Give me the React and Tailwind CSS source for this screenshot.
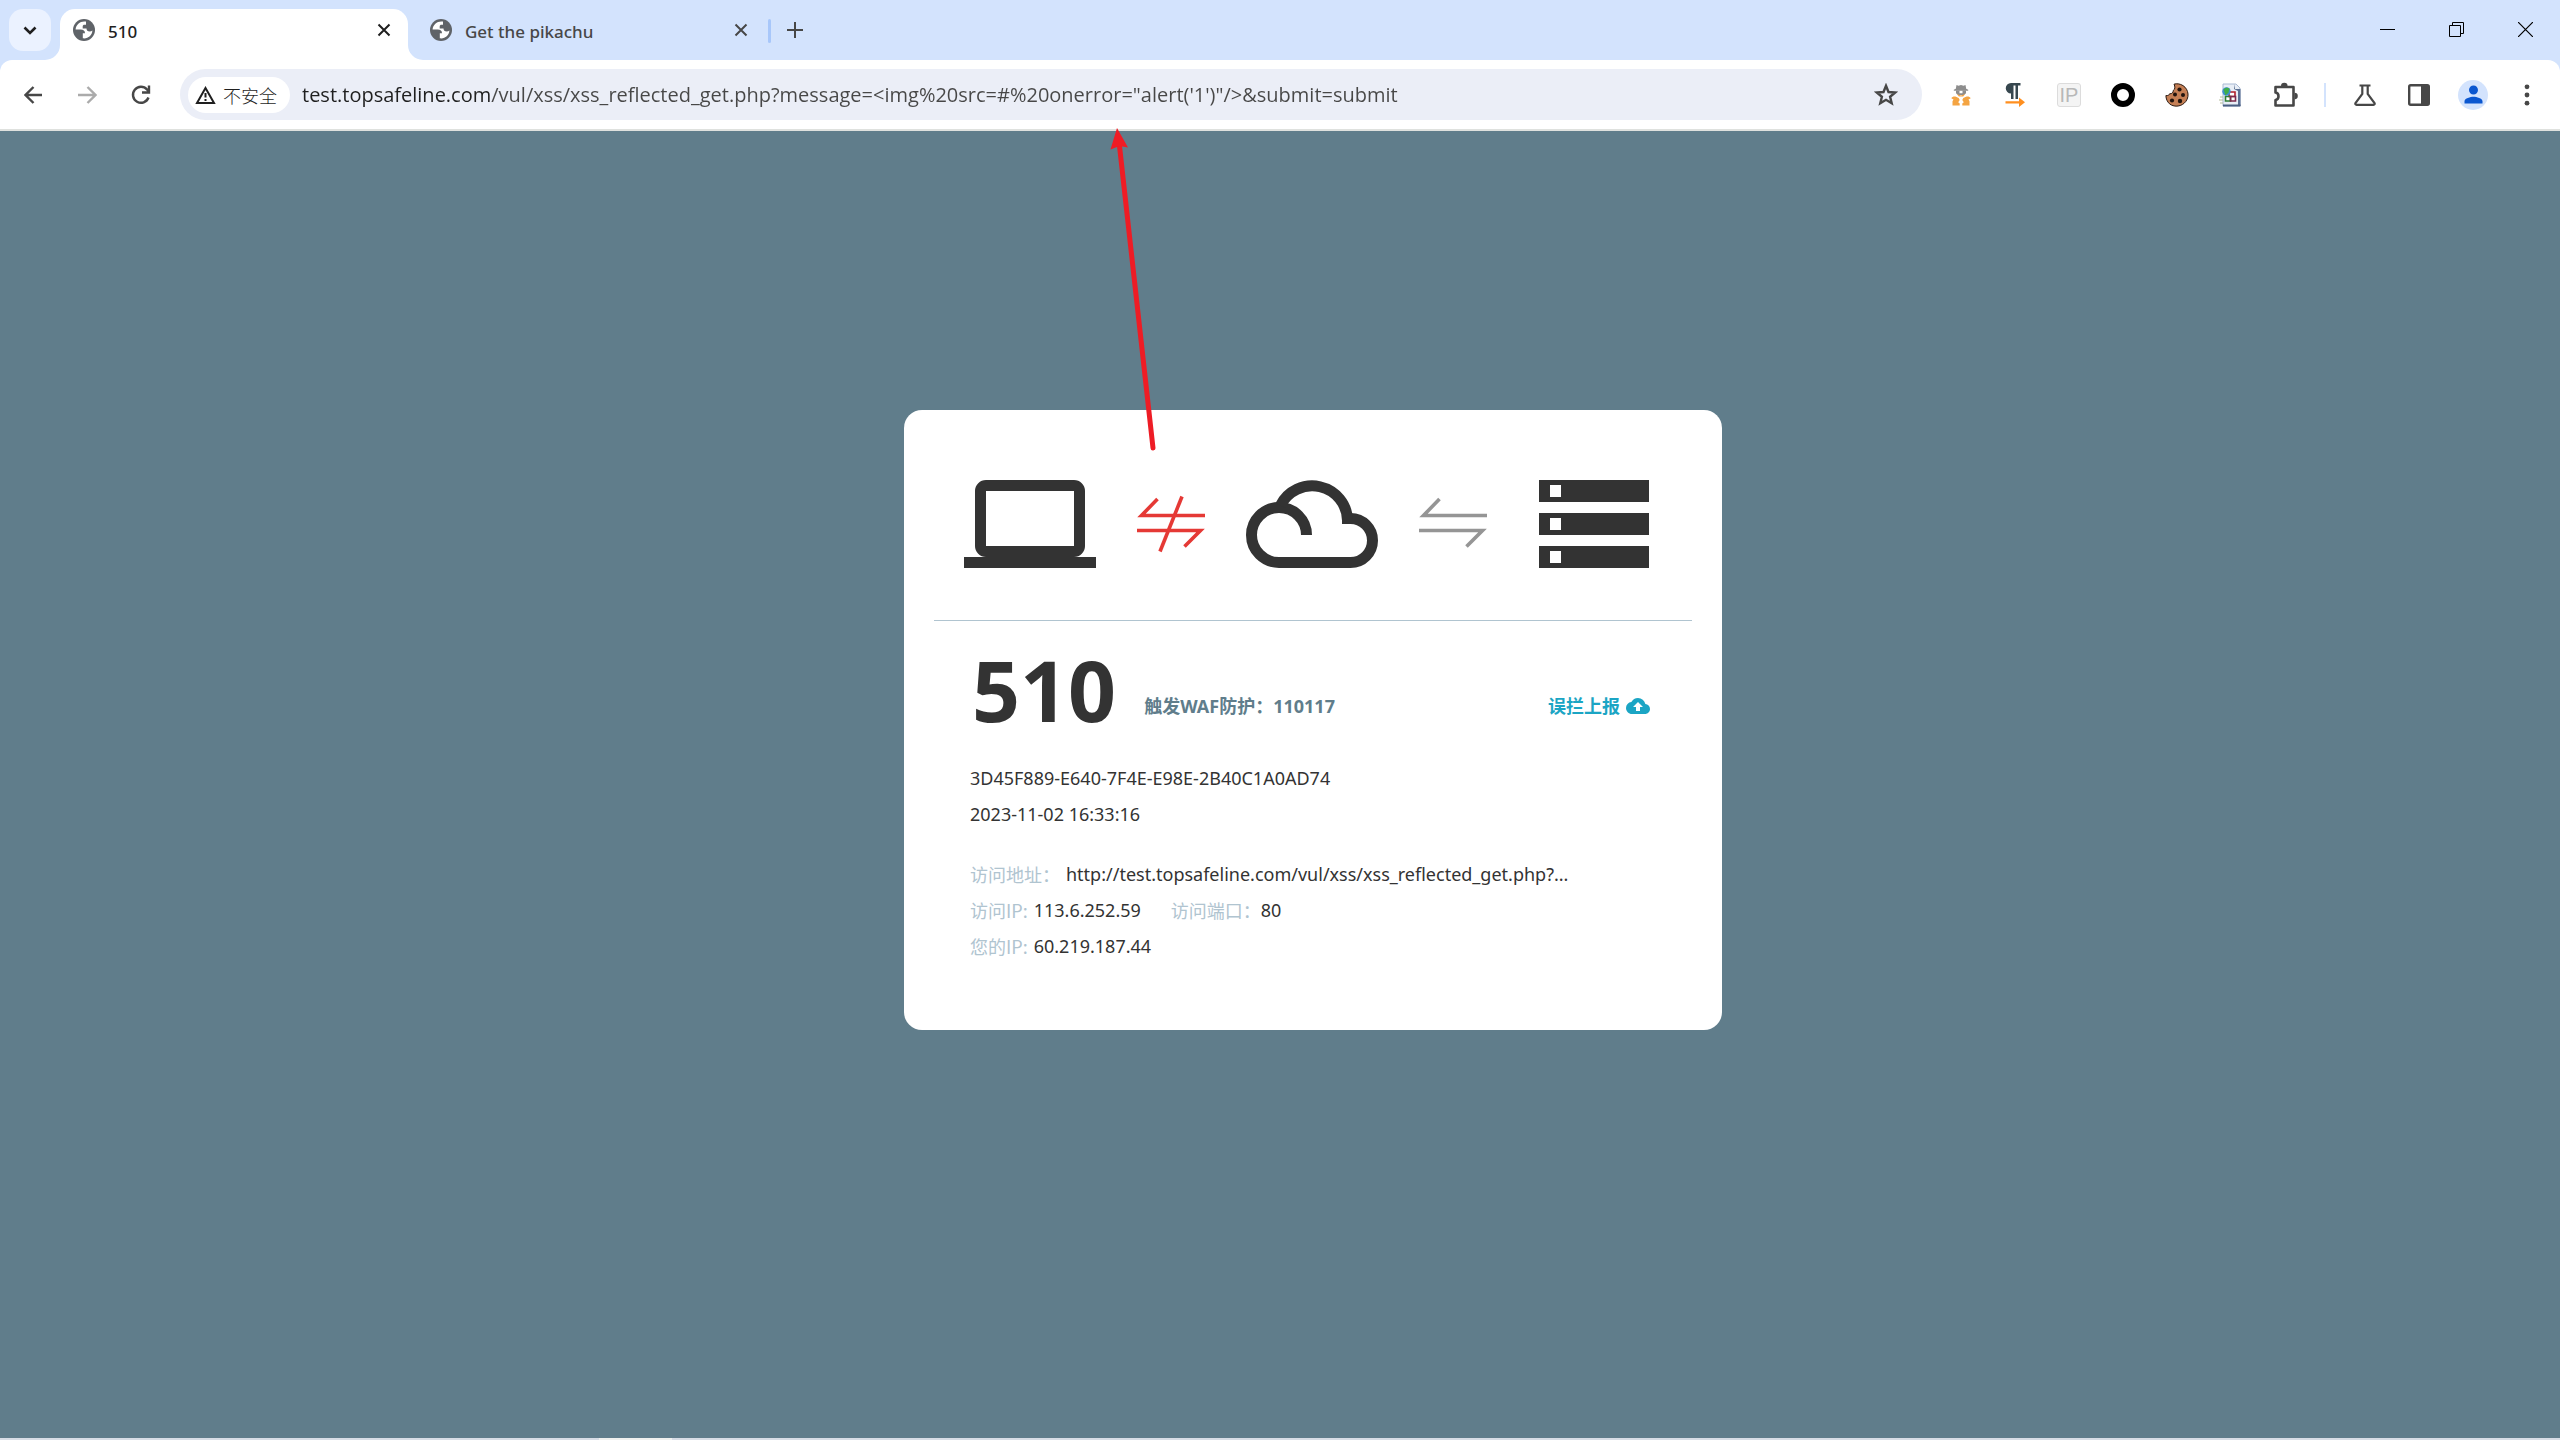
import { useState } from 'react'
import { MdCloudUpload, MdPerson } from 'react-icons/md'

const SANS = "font-['Noto_Sans','Noto_Sans_CJK_SC',sans-serif]"
const CJK = "font-['Noto_Sans_CJK_SC',sans-serif]"

const TABS = [
  { id: 1, title: '510' },
  { id: 2, title: 'Get the pikachu' },
]

const ADDRESS =
  'test.topsafeline.com/vul/xss/xss_reflected_get.php?message=<img%20src=#%20onerror="alert(\'1\')"/>&submit=submit'

function GlobeIcon() {
  return (
    <svg width="22" height="22" viewBox="0 0 22 22" fill="none" className="shrink-0">
      <circle cx="11" cy="11" r="11" fill="#5f6368" />
      <path
        d="M13 2.600C8 1.500 3 5 2.600 10.500h5.200c2.600 0 4.200 1.300 4.200 3.700H9.800v5.100c4.900.8 9.300-2.800 9.600-7.800-.8.700-1.700.9-2.600.9-2.200 0-3.300-1.100-3.300-2.900H9.700V7.600c0-1.300.7-1.900 1.900-1.900h1.400z"
        fill="#fff"
      />
    </svg>
  )
}

function CloseIcon() {
  return (
    <svg width="14" height="14" viewBox="0 0 14 14" stroke="currentColor" strokeWidth="2">
      <path d="M1.500 1.500l11 11M12.500 1.500l-11 11" />
    </svg>
  )
}

function TabStrip({ active, onSelect }) {
  return (
    <div className="flex h-[60px] bg-[#d3e3fd] pl-[9px]">
      <button
        aria-label="Search tabs"
        className="mt-[9px] flex size-[42px] items-center justify-center rounded-[14px] bg-[#ebf2ff] text-[#1f1f1f]"
      >
        <svg width="14" height="9" viewBox="0 0 14 9" fill="none" stroke="currentColor" strokeWidth="2.600">
          <path d="M1.500 1.500L7 7l5.500-5.500" />
        </svg>
      </button>

      {TABS.map(tab => {
        const on = tab.id === active
        return (
          <div
            key={tab.id}
            className={`relative flex h-[51px] self-end items-center rounded-t-[15px] pb-[9px] ${
              on ? 'ml-[9px] w-[348px] bg-white pl-[13px] pr-[17px] text-[#1f1f1f]' : 'w-[360px] pl-[22px] pr-[20px] text-[#474747]'
            }`}
          >
            {on && (
              <>
                <svg className="absolute -left-[15px] bottom-0" width="15" height="15" viewBox="0 0 15 15">
                  <path d="M15 0v15H0A15 15 0 0 0 15 0z" fill="#fff" />
                </svg>
                <svg className="absolute -right-[15px] bottom-0" width="15" height="15" viewBox="0 0 15 15">
                  <path d="M0 0v15h15A15 15 0 0 1 0 0z" fill="#fff" />
                </svg>
              </>
            )}
            <GlobeIcon />
            <button
              onClick={() => onSelect(tab.id)}
              className="ml-[13px] flex-1 truncate pt-[3px] text-left text-[17px] leading-6 font-medium"
            >
              {tab.title}
            </button>
            <button aria-label={`Close ${tab.title}`}>
              <CloseIcon />
            </button>
          </div>
        )
      })}

      <div className="mt-[19px] h-6 w-[3px] rounded-full bg-[#a8c7fa]" />
      <button aria-label="New tab" className="ml-4 flex h-[60px] items-center text-[#474747]">
        <svg width="16" height="16" viewBox="0 0 16 16" stroke="currentColor" strokeWidth="2">
          <path d="M8 0v16M0 8h16" />
        </svg>
      </button>

      <div className="ml-auto flex h-[59px] text-black">
        <button aria-label="Minimize" className="flex w-[69px] items-center justify-center">
          <svg width="15" height="15" viewBox="0 0 15 15" stroke="currentColor">
            <path d="M0 7.500h15" />
          </svg>
        </button>
        <button aria-label="Restore" className="flex w-[69px] items-center justify-center">
          <svg width="15" height="15" viewBox="0 0 15 15" fill="none" stroke="currentColor">
            <path d="M.5 3.500h11v11H.5zM3.500 3.500v-3h11v11h-3" />
          </svg>
        </button>
        <button aria-label="Close" className="flex w-[69px] items-center justify-center">
          <svg width="15" height="15" viewBox="0 0 15 15" stroke="currentColor" strokeWidth="1.200">
            <path d="M0 0l15 15M15 0L0 15" />
          </svg>
        </button>
      </div>
    </div>
  )
}

const EXTENSIONS = [
  {
    name: 'Spy',
    icon: (
      <svg width="20" height="22" viewBox="0 0 20 22">
        <path d="M5.500 1l2 .8L10 1l2.500.8 2-.8.7 3.800 2 .9v1.100H2.800V5.700l2-.9z" fill="#8d8d8d" />
        <path d="M5 6.500h3.500v2.700h3V6.500H15v2.700l-2 1.800H7L5 9.200z" fill="#8d8d8d" />
        <path d="M5.800 10L10 11.500l4.200-1.500-2 2.500H7.800z" fill="#f4a442" />
        <path
          d="M8.700 21.500H1.500v-4.300l1-1.700L.3 14.300c.8-1.500 2.600-2 4.700-1.500l2.700 1.100 1 2.200-1.500 2.100 1.500 1.300zM11.300 21.500h7.200v-4.300l-1-1.700 2.200-1.200c-.8-1.500-2.600-2-4.700-1.500l-2.700 1.100-1 2.200 1.500 2.100-1.500 1.300z"
          fill="#f4a442"
        />
      </svg>
    ),
  },
  {
    name: 'Text direction',
    icon: (
      <svg width="20" height="24" viewBox="0 0 20 24">
        <path d="M15.500 0H6a5 5 0 0 0 0 10.500V16h2.500V2.500h2V16H13V2.500h2.500z" fill="#37474f" />
        <path d="M.5 18.200H14v-3.700l6 4.700-6 4.800v-3.600H.5z" fill="#ff8f1f" />
      </svg>
    ),
  },
  {
    name: 'IP',
    icon: (
      <span className="flex size-6 items-center justify-center rounded-[3px] border border-[#dcdcdc] bg-[#f4f4f4] font-['Liberation_Sans',sans-serif] text-[20px] leading-6 text-[#b8b8b8]">
        IP
      </span>
    ),
  },
  {
    name: 'Ring',
    icon: (
      <svg width="24" height="24" viewBox="0 0 24 24" fill="none">
        <circle cx="12" cy="12" r="9" stroke="#000" strokeWidth="6" />
      </svg>
    ),
  },
  {
    name: 'Cookie',
    icon: (
      <svg width="24" height="24" viewBox="0 0 24 24">
        <path
          d="M9 1.200c3-.9 6-.4 9 1.400a11 11 0 0 1 1.200 17.600c-4 3.600-10.500 4-14.700.6C2.300 18.800 1 16 .9 12.600c2 .1 3.400-.4 3.700-1.800 2.400 0 3.800-1.100 3.600-3.300 2-.9 2.100-4 .8-6.300z"
          fill="#c57f55"
          stroke="#2a1a12"
        />
        <g fill="#21140e">
          <circle cx="14.500" cy="6.500" r="2.100" />
          <circle cx="18" cy="12" r="2" />
          <circle cx="10" cy="11.500" r="2" />
          <circle cx="7" cy="17.500" r="2.100" />
          <circle cx="15" cy="18" r="2.200" />
        </g>
      </svg>
    ),
  },
  {
    name: 'Page tools',
    icon: (
      <svg width="24" height="24" viewBox="0 0 24 24">
        <path d="M4 1h13l4 4v18H4z" fill="#e8eef6" stroke="#a9bad3" />
        <path d="M16 1v5h5.500v17H19V8l-4-2z" fill="#5a6f92" />
        <path d="M7 10h9v8H7z" fill="#fff" />
        <path d="M10 9h6v4.500h-6z" fill="none" stroke="#b3202c" strokeWidth="1.600" />
        <path d="M6.500 13.500h5v4.500h-5z" fill="none" stroke="#2f7d36" strokeWidth="1.600" />
        <path d="M11.500 13.500h5v4.500h-5z" fill="none" stroke="#7c2a4c" strokeWidth="1.600" />
        <circle cx="7.500" cy="8.500" r="4.200" fill="#3c8fd0" />
        <path d="M4.500 6.500c2-2 4-2 6-1l-1 4-3 3z" fill="#3fae49" />
        <path d="M1 14h3M0 17h4M1 20h3" stroke="#b5bd9a" />
        <path d="M4 22.500h17.500" stroke="#4a5f82" strokeWidth="2" />
      </svg>
    ),
  },
  {
    name: 'Extensions',
    icon: (
      <svg width="26" height="26" viewBox="0 0 26 26" fill="none">
        <path
          d="M3.500 5h18v18.500h-18v-5.500c4-.5 4-7 0-7.500z"
          stroke="#474747"
          strokeWidth="2.600"
          strokeLinejoin="round"
        />
        <path d="M9 4a3.300 3.300 0 0 1 6.600 0zM22.500 10.800a3.300 3.300 0 0 1 0 6.600z" fill="#474747" />
      </svg>
    ),
  },
]

function Toolbar() {
  return (
    <div className="bg-[#d3e3fd]">
      <div className="flex h-[71px] items-center rounded-t-[12px] border-b-2 border-[#dfe1de] bg-white pl-6 pr-[6px] text-[#474747]">
        <button aria-label="Back">
          <svg width="19" height="18" viewBox="0 0 19 18" fill="none" stroke="currentColor" strokeWidth="2.400">
            <path d="M18 9H2M9.500 1L1.500 9l8 8" />
          </svg>
        </button>
        <button aria-label="Forward" disabled className="ml-[35px] text-[#ababab]">
          <svg width="19" height="18" viewBox="0 0 19 18" fill="none" stroke="currentColor" strokeWidth="2.400">
            <path d="M0 9h16M9.500 1l8 8-8 8" />
          </svg>
        </button>
        <button aria-label="Reload" className="ml-[34px]">
          <svg width="20" height="20" viewBox="0 0 20 20" fill="none" stroke="currentColor" strokeWidth="2.400">
            <path d="M17.500 12.500A8 8 0 1 1 16 4.500l1.500 1.700M18 .5v7h-7" />
          </svg>
        </button>

        <div className="ml-[29px] flex h-[51px] flex-1 items-center rounded-full bg-[#ebeef7] pl-2 pr-6">
          <button className="flex h-9 items-center gap-[7px] rounded-full bg-white pl-[7px] pr-[13px] text-[#1f1f1f]">
            <svg width="21" height="18" viewBox="0 0 21 18" fill="none" stroke="currentColor" strokeWidth="2">
              <path d="M10.500 2L19 17H2z" />
              <path d="M10.500 7v4.500M10.500 13v2" />
            </svg>
            <span className={`${CJK} text-[18px] leading-6 font-light`}>不安全</span>
          </button>
          <input
            aria-label="Address"
            defaultValue={ADDRESS}
            className="ml-3 h-9 min-w-0 flex-1 bg-linear-to-r from-[#1f1f1f] from-[188px] to-[#474747] to-[188px] bg-clip-text font-['Open_Sans',sans-serif] text-[20px] text-transparent outline-none"
          />
          <button aria-label="Bookmark this page">
            <svg width="24" height="24" viewBox="0 0 24 24" fill="none" stroke="currentColor" strokeWidth="2.400">
              <path d="M12 2.800l2.500 6.200 6.700.5-5.100 4.300 1.600 6.500L12 16.800l-5.700 3.500 1.600-6.500-5.100-4.300L9.500 9z" />
            </svg>
          </button>
        </div>

        <div className="ml-3 flex items-center">
          {EXTENSIONS.map(ext => (
            <button key={ext.name} aria-label={ext.name} className="flex w-[54px] justify-center">
              {ext.icon}
            </button>
          ))}
          <div className="ml-3 mr-3 h-6 w-[2px] bg-[#d3e3fd]" />
          <button aria-label="Labs" className="flex w-[54px] justify-center">
            <svg width="22" height="22" viewBox="0 0 22 22" fill="none" stroke="currentColor" strokeWidth="2.200">
              <path d="M5.500 1.500h11M8.300 1.500v8.500L1.500 19c-.5 1 0 1.800 1 1.800h17c1 0 1.500-.8 1-1.800l-6.800-9V1.500" />
            </svg>
          </button>
          <button aria-label="Side panel" className="flex w-[54px] justify-center">
            <svg width="22" height="22" viewBox="0 0 22 22" fill="none">
              <rect x="1.200" y="1.200" width="19.600" height="19.600" rx="1.500" stroke="currentColor" strokeWidth="2.400" />
              <path d="M13 1h8v20h-8z" fill="currentColor" />
            </svg>
          </button>
          <button aria-label="Profile" className="flex w-[54px] justify-center">
            <span className="flex size-[30px] items-center justify-center rounded-full bg-[#d3e3fd] text-[#0b57d0]">
              <MdPerson size={27} />
            </span>
          </button>
          <button aria-label="Menu" className="flex w-[54px] justify-center">
            <svg width="6" height="22" viewBox="0 0 6 22" fill="currentColor">
              <circle cx="3" cy="2.800" r="2.400" />
              <circle cx="3" cy="11" r="2.400" />
              <circle cx="3" cy="19.200" r="2.400" />
            </svg>
          </button>
        </div>
      </div>
    </div>
  )
}

function LaptopIcon() {
  return (
    <svg width="132" height="88" viewBox="0 0 132 88" fill="none">
      <rect x="16.500" y="5.500" width="99" height="66" rx="5.500" stroke="#333" strokeWidth="11" />
      <path d="M22 11h88v55H22z" fill="#fff" />
      <path d="M0 77h132v11H0z" fill="#333" />
    </svg>
  )
}

function CloudIcon() {
  return (
    <svg width="132" height="88" viewBox="0 0 132 88" fill="none" stroke="#333" strokeWidth="11">
      <path d="M60.500 55A27.500 27.500 0 1 0 33 82.500h71.500a22 22 0 0 0 0-44H96" />
      <path d="M101.500 44v-3.500A35.300 35 0 0 0 34.500 25.500" />
    </svg>
  )
}

function ServerIcon() {
  return (
    <svg width="132" height="88" viewBox="0 0 132 88">
      <path d="M11 0h110v22H11zM11 33h110v22H11zM11 66h110v22H11z" fill="#333" />
      <path d="M22 5h11v12H22zM22 38h11v12H22zM22 71h11v12H22z" fill="#fff" />
    </svg>
  )
}

function LinkArrows({ color, broken }) {
  return (
    <svg width="68" height="88" viewBox="0 0 68 88" fill="none" stroke={color} strokeWidth="3.600">
      <path d="M20.500 19L4.500 35.500H68M0 50.500h63.500L47.500 66.500" />
      {broken && <path d="M45 16.500L23 71.500" />}
    </svg>
  )
}

function Label({ children }) {
  return <span className={`${CJK} text-[#b0c4d0]`}>{children}</span>
}

function BlockCard() {
  return (
    <section className="relative w-[818px] rounded-[18px] bg-white px-[30px] pb-[66px] text-[18px] leading-9 text-[#333]">
      <div className="flex items-center justify-between border-b border-[#b0c4d0] pt-[70px] pb-[52px] pl-[30px] pr-8">
        <LaptopIcon />
        <LinkArrows color="#e53935" broken />
        <CloudIcon />
        <LinkArrows color="#959595" />
        <ServerIcon />
      </div>

      <div className="pl-9 pr-[42px]">
        <div className="flex items-end pt-[21px]">
          <h1 className="pl-[2px] text-[84px] leading-[96px] font-bold">510</h1>
          <p className="ml-7 pb-[14px] font-bold text-[#607d8b]">触发WAF防护：110117</p>
          <a href="#report" className="mb-[14px] ml-auto flex items-center gap-[6px] font-bold text-[#1ba5c4]">
            误拦上报
            <MdCloudUpload size={24} />
          </a>
        </div>

        <div className="mt-[22px]">
          <p>3D45F889-E640-7F4E-E98E-2B40C1A0AD74</p>
          <p>2023-11-02 16:33:16</p>
        </div>

        <div className="mt-6">
          <p className="flex gap-[6px]">
            <Label>访问地址：</Label>
            http://test.topsafeline.com/vul/xss/xss_reflected_get.php?...
          </p>
          <div className="flex gap-[30px]">
            <p className="flex gap-[6px]">
              <Label>访问IP:</Label>
              113.6.252.59
            </p>
            <p className="flex">
              <Label>访问端口：</Label>
              80
            </p>
          </div>
          <p className="flex gap-[6px]">
            <Label>您的IP:</Label>
            60.219.187.44
          </p>
        </div>
      </div>

      {/* pointer up to the address bar */}
      <svg className="absolute -top-[282px] left-[200px]" width="56" height="324" viewBox="0 0 56 324" fill="none">
        <path d="M15.500 18L49 320" stroke="#ee1c25" strokeWidth="5" strokeLinecap="round" />
        <path d="M13 0l11 19.500-8.500-1.500L6.500 21.500z" fill="#ee1c25" />
      </svg>
    </section>
  )
}

export default function App() {
  const [active, setActive] = useState(1)

  return (
    <div className={`flex min-h-screen flex-col ${SANS}`}>
      <header>
        <TabStrip active={active} onSelect={setActive} />
        <Toolbar />
      </header>

      <main className="flex flex-1 items-start justify-center bg-[#607d8b] pt-[279px] pl-[66px]">
        <BlockCard />
      </main>

      {/* top edge of the taskbar */}
      <footer className="flex h-[2px] bg-[#d8dde6] pl-[599px]">
        <div className="w-[73px] bg-[#f0f1ef]" />
      </footer>
    </div>
  )
}
